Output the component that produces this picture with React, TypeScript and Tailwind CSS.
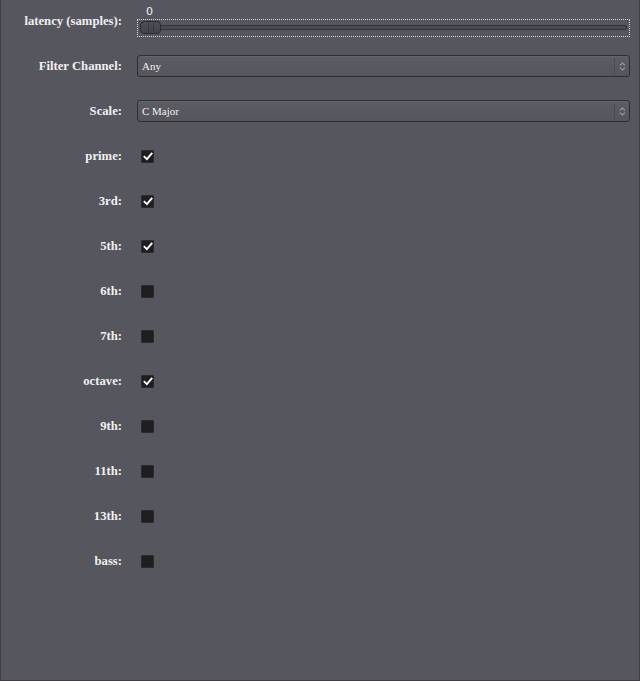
import React from "react";

const serif = { fontFamily: '"Liberation Serif", "Times New Roman", serif' };

function Row({ label, children }: { label: string; children: React.ReactNode }) {
  return (
    <div className="flex h-[42px] items-center">
      <div
        className="w-[121px] shrink-0 pt-[1px] text-right text-[12.7px] font-bold text-[#f0f0f0]"
        style={serif}
      >
        {label}
      </div>
      <div className="ml-[15px] flex-1 pr-[9px]">{children}</div>
    </div>
  );
}

function Check({ on }: { on: boolean }) {
  return (
    <div className="ml-[4px] flex h-[13px] w-[13px] items-center justify-center rounded-[1px] border border-[#2b2b2e] bg-[#1e1e20]">
      {on && (
        <svg width="10" height="9" viewBox="0 0 10 9">
          <path d="M1.5 4.8 L3.9 7.2 L8.6 1.6" fill="none" stroke="#ffffff" strokeWidth="1.9" strokeLinecap="square" />
        </svg>
      )}
    </div>
  );
}

function Select({ value }: { value: string }) {
  return (
    <div className="flex h-[22px] items-center rounded-[3px] border border-[#2e2e33] bg-gradient-to-b from-[#5c5c65] to-[#55555d] shadow-[inset_0_1px_0_rgba(255,255,255,0.06)]">
      <div className="flex-1 pl-[4px] text-[11px] text-[#f0f0f0]" style={serif}>
        {value}
      </div>
      <div className="flex h-[16px] w-[15px] items-center justify-center border-l border-[#4a4a52]">
        <svg width="7" height="9" viewBox="0 0 7 9">
          <path d="M1 3.3 L3.5 1 L6 3.3 M1 5.7 L3.5 8 L6 5.7" fill="none" stroke="#9a9aa2" strokeWidth="1.1" />
        </svg>
      </div>
    </div>
  );
}

function Slider() {
  return (
    <div className="relative">
      <div
        className="absolute -top-[13px] left-[9px] text-[11px] leading-none text-[#f0f0f0]"
        style={{ fontFamily: '"DejaVu Sans", sans-serif' }}
      >
        0
      </div>
      <div className="flex h-[18px] items-center border border-dotted border-[#d8d8d8] px-[2px]">
        <div className="relative flex h-[13px] flex-1 items-center">
          <div className="h-[5px] flex-1 rounded-[2px] border border-[#323237] bg-[#4a4a52]" />
          <div className="absolute left-0 top-0 flex h-[13px] w-[21px] items-center justify-center rounded-[4px] border border-[#2a2a2f] bg-gradient-to-b from-[#4e4e56] to-[#43434a]">
            <div className="h-[9px] w-[1px] bg-[#38383e]" />
            <div className="ml-[4px] h-[9px] w-[1px] bg-[#38383e]" />
          </div>
        </div>
      </div>
    </div>
  );
}

const checks: [string, boolean][] = [
  ["prime:", true],
  ["3rd:", true],
  ["5th:", true],
  ["6th:", false],
  ["7th:", false],
  ["octave:", true],
  ["9th:", false],
  ["11th:", false],
  ["13th:", false],
  ["bass:", false],
];

export default function App() {
  return (
    <div className="h-[681px] w-[640px] border-x border-b border-[#3e3e44] bg-[#56565e]">
      <div className="flex flex-col gap-[3px]">
        <Row label="latency (samples):">
          <div className="pt-[13px]">
            <Slider />
          </div>
        </Row>
        <Row label="Filter Channel:">
          <Select value="Any" />
        </Row>
        <Row label="Scale:">
          <Select value="C Major" />
        </Row>
        {checks.map(([l, on]) => (
          <Row key={l} label={l}>
            <Check on={on} />
          </Row>
        ))}
      </div>
    </div>
  );
}
